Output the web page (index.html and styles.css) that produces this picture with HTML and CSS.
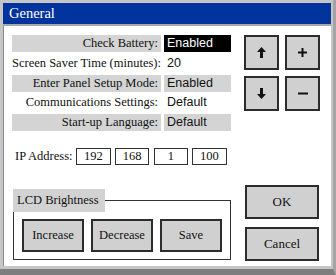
FILE: index.html
```html
<!DOCTYPE html>
<html lang="en">
<head>
    <meta charset="UTF-8">
    <title>General</title>
    <link rel="stylesheet" href="styles.css">
</head>
<body>
    <div class="window">
        <div class="titlebar">General</div>

        <div class="content">
            <!-- settings column -->
            <div class="left-col">
                <div class="settings">
                    <div class="label shade">Check Battery:</div>
                    <div class="value selected">Enabled</div>

                    <div class="label">Screen Saver Time (minutes):</div>
                    <div class="value">20</div>

                    <div class="label shade">Enter Panel Setup Mode:</div>
                    <div class="value shade">Enabled</div>

                    <div class="label">Communications Settings:</div>
                    <div class="value">Default</div>

                    <div class="label shade">Start-up Language:</div>
                    <div class="value shade">Default</div>
                </div>

                <div class="ip-row">
                    <span class="ip-label">IP Address:</span>
                    <span class="ip-box">192</span>
                    <span class="ip-box">168</span>
                    <span class="ip-box">1</span>
                    <span class="ip-box">100</span>
                </div>

                <fieldset class="lcd">
                    <legend>LCD Brightness</legend>
                    <div class="lcd-buttons">
                        <button class="btn">Increase</button>
                        <button class="btn">Decrease</button>
                        <button class="btn">Save</button>
                    </div>
                </fieldset>
            </div>

            <!-- buttons column -->
            <div class="right-col">
                <div class="keypad">
                    <button class="btn key" aria-label="Up">
                        <svg width="9" height="11" viewBox="0 0 9 11"><path d="M4.5 0 L9 5 L6 5 L6 11 L3 11 L3 5 L0 5 Z" fill="#111"/></svg>
                    </button>
                    <button class="btn key" aria-label="Plus">
                        <svg width="9" height="9" viewBox="0 0 9 9"><path d="M3.5 0 H5.5 V3.5 H9 V5.5 H5.5 V9 H3.5 V5.5 H0 V3.5 H3.5 Z" fill="#111"/></svg>
                    </button>
                    <button class="btn key" aria-label="Down">
                        <svg width="9" height="11" viewBox="0 0 9 11"><path d="M4.5 11 L9 6 L6 6 L6 0 L3 0 L3 6 L0 6 Z" fill="#111"/></svg>
                    </button>
                    <button class="btn key" aria-label="Minus">
                        <svg width="10" height="9" viewBox="0 0 10 9"><rect x="0" y="3.5" width="10" height="2" fill="#111"/></svg>
                    </button>
                </div>

                <div class="dialog-buttons">
                    <button class="btn wide">OK</button>
                    <button class="btn wide">Cancel</button>
                </div>
            </div>
        </div>
    </div>
</body>
</html>
```

FILE: styles.css
```css
/* base */
body {
    margin: 0;
    background: #c6c6c6;
    font-family: "Liberation Serif", "Times New Roman", serif;
    font-size: 12.5px;
    color: #111;
}

.window {
    width: 336px;
    height: 275px;
    box-sizing: border-box;
    padding: 3px 2px 3px 3px;
    border-right: 3px solid #a4a4a4;
    border-bottom: 6px solid #7e7e7e;
    background: #c6c6c6;
    display: flex;
    flex-direction: column;
}

.titlebar {
    height: 21px;
    line-height: 21px;
    padding-left: 6px;
    background: #00339c;
    color: #fff;
    font-size: 14.5px;
    border-bottom: 2px solid #a8a8a8;
}

.content {
    flex: 1;
    background: #fff;
    border-left: 1px solid #8c8c8c;
    display: flex;
    justify-content: space-between;
    padding: 9px 10px 5px 8px;
}

/* settings list */
.left-col {
    width: 219px;
}

.settings {
    display: grid;
    grid-template-columns: 149px 67px;
    grid-auto-rows: 17px;
    column-gap: 3px;
    row-gap: 2.75px;
}

.label,
.value {
    line-height: 17px;
    white-space: nowrap;
}

.label {
    text-align: right;
    padding-right: 3px;
}

.value {
    padding-left: 3px;
    font-family: "Liberation Sans", Arial, sans-serif;
    font-size: 12.5px;
}

.shade {
    background: #d4d4d4;
}

.selected {
    background: #000;
    color: #fff;
}

/* ip address */
.ip-row {
    display: flex;
    align-items: center;
    margin-top: 17px;
    height: 17px;
}

.ip-label {
    width: 63px;
    padding-left: 3px;
}

.ip-box {
    width: 35px;
    height: 17px;
    box-sizing: border-box;
    border: 1px solid #333;
    margin-right: 4.5px;
    text-align: center;
    line-height: 15px;
}

/* lcd group */
.lcd {
    margin: 24px 0 0 1px;
    padding: 7px 7px 7px 8px;
    border: 1px solid #333;
    width: 218px;
    box-sizing: border-box;
}

.lcd legend {
    margin-left: -9px;
    padding: 0 6px 0 4px;
    height: 23px;
    line-height: 23px;
    background: #d2d2d2;
}

.lcd-buttons {
    display: flex;
    gap: 7px;
}

/* buttons */
.btn {
    box-sizing: border-box;
    border: 2px solid #2c2c2c;
    background: #d0d0d0;
    font-family: "Liberation Serif", "Times New Roman", serif;
    font-size: 12.5px;
    color: #111;
    padding: 0;
    width: 62px;
    height: 33px;
    display: flex;
    align-items: center;
    justify-content: center;
}

.right-col {
    display: flex;
    flex-direction: column;
    justify-content: space-between;
    width: 76px;
}

.keypad {
    display: grid;
    grid-template-columns: 35px 35px;
    grid-auto-rows: 35px;
    gap: 6px;
    margin-left: -1px;
}

.key {
    width: 35px;
    height: 35px;
}

.dialog-buttons {
    display: flex;
    flex-direction: column;
    gap: 8px;
}

.wide {
    width: 74px;
    height: 34px;
    font-size: 13px;
}
```
